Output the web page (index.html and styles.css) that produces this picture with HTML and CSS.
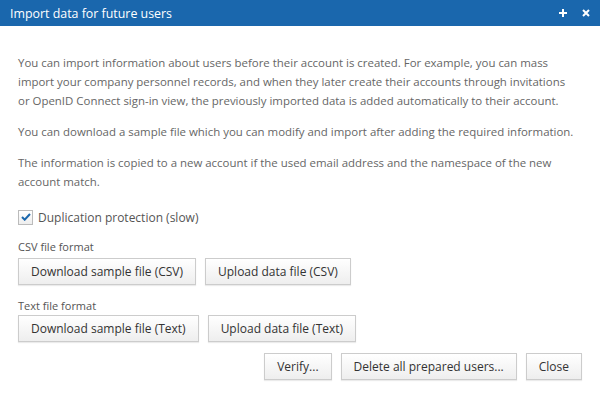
FILE: index.html
```html
<!DOCTYPE html>
<html lang="en">
<head>
    <meta charset="UTF-8">
    <title>Import data for future users</title>
    <link rel="stylesheet" href="styles.css">
</head>
<body>
    <div class="dialog">
        <div class="dialog-header">
            <span class="dialog-title">Import data for future users</span>
            <div class="header-tools">
                <svg width="8" height="8" viewBox="0 0 8 8"><path d="M4 0v8M0 4h8" stroke="#fff" stroke-width="2"/></svg>
                <svg width="8" height="8" viewBox="0 0 8 8"><path d="M1 1l6 6M7 1l-6 6" stroke="#fff" stroke-width="2"/></svg>
            </div>
        </div>

        <div class="dialog-body">
            <p>You can import information about users before their account is created. For example, you can mass import your company personnel records, and when they later create their accounts through invitations or OpenID Connect sign-in view, the previously imported data is added automatically to their account.</p>
            <p>You can download a sample file which you can modify and import after adding the required information.</p>
            <p>The information is copied to a new account if the used email address and the namespace of the new account match.</p>

            <label class="check-row">
                <span class="checkbox">
                    <svg width="10" height="8" viewBox="0 0 10 8"><path d="M1 4l2.7 2.7L9 1" fill="none" stroke="#1a67ad" stroke-width="2"/></svg>
                </span>
                Duplication protection (slow)
            </label>

            <div class="section-label">CSV file format</div>
            <div class="btn-row">
                <button class="btn">Download sample file (CSV)</button>
                <button class="btn">Upload data file (CSV)</button>
            </div>

            <div class="section-label second">Text file format</div>
            <div class="btn-row">
                <button class="btn">Download sample file (Text)</button>
                <button class="btn">Upload data file (Text)</button>
            </div>
        </div>

        <div class="dialog-footer">
            <button class="btn">Verify...</button>
            <button class="btn">Delete all prepared users...</button>
            <button class="btn">Close</button>
        </div>
    </div>
</body>
</html>
```

FILE: styles.css
```css
body {
    margin: 0;
    font-family: "Open Sans", sans-serif;
    background: #fff;
    color: #666;
}

.dialog {
    width: 600px;
    height: 395px;
    display: flex;
    flex-direction: column;
}

.dialog-header {
    flex-shrink: 0;
    height: 26px;
    background: #1a67ad;
    color: #fff;
    display: flex;
    align-items: center;
    justify-content: space-between;
    padding: 0 10px 0 10px;
}

.dialog-title {
    font-size: 12.4px;
}

.header-tools {
    display: flex;
    gap: 15px;
}

.header-tools svg {
    display: block;
}

.dialog-body {
    padding: 27px 22px 0 18px;
    font-size: 11.45px;
}

.dialog-body p {
    margin: 0 0 12px;
    line-height: 19px;
}

/* p margin collapses into this one */
.check-row {
    display: flex;
    align-items: center;
    gap: 5px;
    height: 16px;
    margin-top: 18px;
    font-size: 12px;
    color: #555;
}

.checkbox {
    width: 13px;
    height: 13px;
    border: 1px solid #bbb;
    background: linear-gradient(#fff, #eee);
    display: flex;
    align-items: center;
    justify-content: center;
}

.section-label {
    font-size: 11px;
    line-height: 15px;
    color: #555;
    margin-top: 14px;
    margin-bottom: 4px;
}

.section-label.second {
    margin-top: 13px;
    margin-bottom: 2px;
}

.btn-row {
    display: flex;
    gap: 9px;
}

.btn {
    font-family: "Open Sans", sans-serif;
    font-size: 12px;
    color: #333;
    height: 27px;
    padding: 0 12px;
    border: 1px solid #ccc;
    background: linear-gradient(#fff, #eee);
    box-shadow: 0 1px 1px rgba(0, 0, 0, 0.08);
    cursor: pointer;
}

.dialog-footer {
    display: flex;
    justify-content: flex-end;
    gap: 9px;
    padding: 11px 18px 0;
}
```
